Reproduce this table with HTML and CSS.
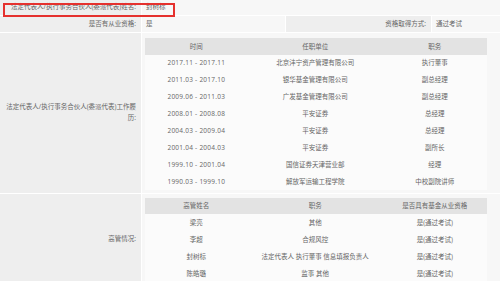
FILE: index.html
```html
<!DOCTYPE html>
<html lang="zh-CN">
<head>
<meta charset="utf-8">
<title>基金管理人信息</title>
<link rel="stylesheet" href="styles.css">
</head>
<body>
<div class="sheet">
  <div class="form">
    <div class="lbl">法定代表人/执行事务合伙人(委派代表)姓名:</div>
    <div class="val span3">封树标</div>

    <div class="lbl">是否有从业资格:</div>
    <div class="val">是</div>
    <div class="lbl">资格取得方式:</div>
    <div class="val">通过考试</div>

    <div class="lbl">法定代表人/执行事务合伙人(委派代表)工作履历:</div>
    <div class="val span3 tcell tcell-first">
      <table class="sub">
        <colgroup><col class="c1"><col class="c2"><col class="c3"></colgroup>
        <thead><tr><th>时间</th><th>任职单位</th><th>职务</th></tr></thead>
        <tbody>
          <tr><td class="date">2017.11 - 2017.11</td><td>北京沣宁资产管理有限公司</td><td>执行董事</td></tr>
          <tr><td class="date">2011.03 - 2017.10</td><td>银华基金管理有限公司</td><td>副总经理</td></tr>
          <tr><td class="date">2009.06 - 2011.03</td><td>广发基金管理有限公司</td><td>副总经理</td></tr>
          <tr><td class="date">2008.01 - 2008.08</td><td>平安证券</td><td>总经理</td></tr>
          <tr><td class="date">2004.03 - 2009.04</td><td>平安证券</td><td>总经理</td></tr>
          <tr><td class="date">2001.04 - 2004.03</td><td>平安证券</td><td>副所长</td></tr>
          <tr><td class="date">1999.10 - 2001.04</td><td>国信证券天津营业部</td><td>经理</td></tr>
          <tr><td class="date">1990.03 - 1999.10</td><td>解放军运输工程学院</td><td>中校副院讲师</td></tr>
        </tbody>
      </table>
    </div>

    <div class="lbl">高管情况:</div>
    <div class="val span3 tcell">
      <table class="sub">
        <colgroup><col class="c1"><col class="c2"><col class="c3"></colgroup>
        <thead><tr><th>高管姓名</th><th>职务</th><th>是否具有基金从业资格</th></tr></thead>
        <tbody>
          <tr><td>梁亮</td><td>其他</td><td>是(通过考试)</td></tr>
          <tr><td>李超</td><td>合规风控</td><td>是(通过考试)</td></tr>
          <tr><td>封树标</td><td>法定代表人 执行董事 信息填报负责人</td><td>是(通过考试)</td></tr>
          <tr><td>陈皓璐</td><td>监事 其他</td><td>是(通过考试)</td></tr>
        </tbody>
      </table>
    </div>
  </div>
  <div class="mark"></div>
</div>
</body>
</html>
```

FILE: styles.css
```css
html, body {
  margin: 0;
  padding: 0;
  background: #ffffff;
}

.sheet {
  position: relative;
  width: 500px;
  height: 281px;
  overflow: hidden;
  font-family: "Open Sans", "Noto Sans CJK SC", sans-serif;
  font-size: 6.5px;
  color: #666666;
}

.form {
  display: grid;
  grid-template-columns: 141px 143px 145px 1fr;
  grid-template-rows: 15px 16px auto auto;
  gap: 1px;
  background: #ffffff;
}

.lbl {
  background: #eeeeee;
  display: flex;
  align-items: center;
  justify-content: flex-end;
  text-align: right;
  padding: 0 5px 0 2px;
  line-height: 10.5px;
}

.val {
  background: #f7f7f7;
  display: flex;
  align-items: center;
  padding: 0 4px 0 4px;
  line-height: 10.5px;
}

.span3 {
  grid-column: span 3;
}

.tcell {
  display: block;
  padding: 4px 13px 3px 3px;
}

.tcell-first {
  padding-top: 5px;
}

.sub {
  width: 100%;
  border-collapse: collapse;
  table-layout: fixed;
}

.sub .c1 { width: 30%; }
.sub .c2 { width: 39.5%; }
.sub .c3 { width: 30.5%; }

.sub th {
  background: #e3e3e3;
  font-weight: normal;
  height: 16.5px;
  padding: 0;
  text-align: center;
  vertical-align: middle;
  line-height: 9px;
}

.sub td {
  background: #fbfbfb;
  height: 16.9px;
  padding: 0;
  text-align: center;
  vertical-align: middle;
  line-height: 9px;
  white-space: nowrap;
}

.sub td.date {
  letter-spacing: 0.25px;
}

.mark {
  position: absolute;
  left: 3px;
  top: 3px;
  width: 168px;
  height: 10px;
  border: 2px solid #e5312e;
}
```
